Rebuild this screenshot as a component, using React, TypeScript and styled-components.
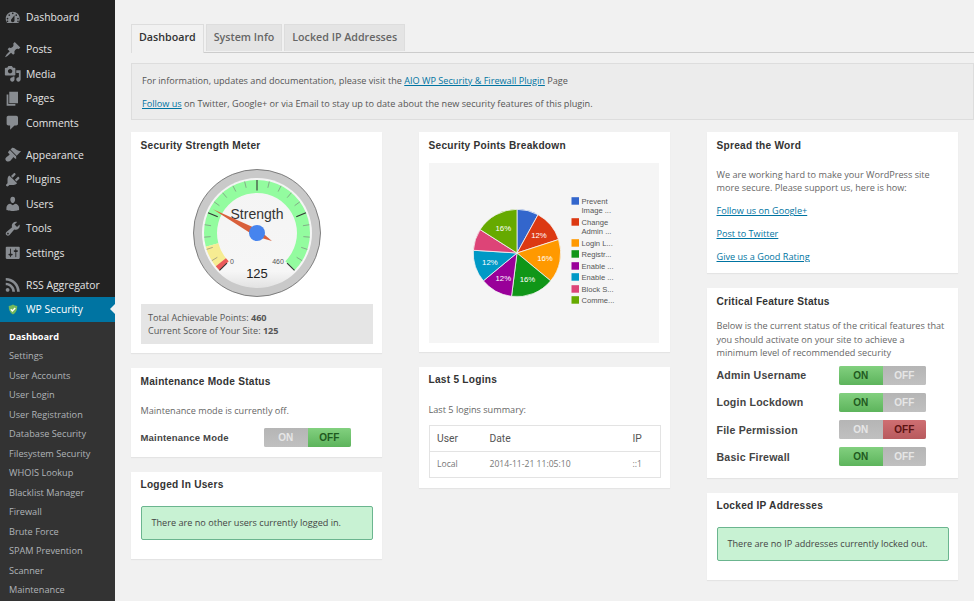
import React from "react"
import styled, { createGlobalStyle } from "styled-components"

const GlobalStyle = createGlobalStyle`
    html, body {
        margin: 0;
        padding: 0;
        height: 100%;
        overflow: hidden;
        background: #f1f1f1;
    }
    body {
        font-family: "Open Sans", sans-serif;
        font-size: 9.15px;
        color: #555;
    }
`

const icons: Record<string, string> = {
    dashboard:
        "M3.76 16h12.48c1.1-1.37 1.76-3.11 1.76-5 0-4.42-3.58-8-8-8s-8 3.58-8 8c0 1.89.66 3.63 1.76 5zM10 4c.55 0 1 .45 1 1s-.45 1-1 1-1-.45-1-1 .45-1 1-1zM6 6c.55 0 1 .45 1 1s-.45 1-1 1-1-.45-1-1 .45-1 1-1zm8 0c.55 0 1 .45 1 1s-.45 1-1 1-1-.45-1-1 .45-1 1-1zm-5.37 5.55L12 7v6c0 1.1-.9 2-2 2s-2-.9-2-2c0-.57.24-1.08.63-1.45zM4 10c.55 0 1 .45 1 1s-.45 1-1 1-1-.45-1-1 .45-1 1-1zm12 0c.55 0 1 .45 1 1s-.45 1-1 1-1-.45-1-1 .45-1 1-1zm-12 3c.55 0 1 .45 1 1s-.45 1-1 1-1-.45-1-1 .45-1 1-1zm12 0c.55 0 1 .45 1 1s-.45 1-1 1-1-.45-1-1 .45-1 1-1z",
    posts:
        "M10.44 3.02l1.82-1.82 6.36 6.35-1.83 1.82c-1.05-.68-2.48-.57-3.41.36l-.75.75c-.92.93-1.04 2.35-.35 3.41l-1.83 1.82-2.41-2.41-2.8 2.79c-.42.42-3.38 2.71-3.8 2.29s1.86-3.39 2.28-3.81l2.79-2.79L4.1 9.36l1.83-1.82c1.05.69 2.48.57 3.4-.36l.75-.75c.93-.92 1.05-2.35.36-3.41z",
    media:
        "M13 11V4c0-.55-.45-1-1-1h-1.67L9 1H5L3.67 3H2c-.55 0-1 .45-1 1v7c0 .55.45 1 1 1h10c.55 0 1-.45 1-1zM7 4.5c1.38 0 2.5 1.12 2.5 2.5S8.38 9.5 7 9.5 4.5 8.38 4.5 7 5.62 4.5 7 4.5zM14 6h5v10.5c0 1.38-1.12 2.5-2.5 2.5S14 17.88 14 16.5s1.12-2.5 2.5-2.5c.17 0 .34.02.5.05V9h-3V6zm-4 8.05V13h2v3.5c0 1.38-1.12 2.5-2.5 2.5S7 17.88 7 16.5 8.12 14 9.5 14c.17 0 .34.02.5.05z",
    pages: "M6 15V2h10v13H6zm-1 1h8v2H3V5h2v11z",
    comments:
        "M5 2h9c1.1 0 2 .9 2 2v7c0 1.1-.9 2-2 2h-2l-5 5v-5H5c-1.1 0-2-.9-2-2V4c0-1.1.9-2 2-2z",
    appearance:
        "M14.48 11.06L7.41 3.99l1.5-1.5c.5-.56 2.3-.47 3.51.32 1.21.8 1.43 1.28 2.91 2.1 1.18.64 2.45 1.26 4.45.85zm-.71.71L6.7 4.7 4.93 6.47c-.39.39-.39 1.02 0 1.41l1.06 1.06c.39.39.39 1.03 0 1.42-.6.6-1.43 1.11-2.21 1.69-.35.26-.7.53-1.01.84C1.43 13.71.96 15.65 2.65 17s3.64.89 4.99-.5c.3-.3.57-.65.83-1 .58-.78 1.09-1.6 1.69-2.21.39-.39 1.03-.39 1.42 0l1.06 1.06c.39.39 1.02.39 1.41 0z",
    plugins:
        "M13.11 4.36L9.87 7.6 8 5.73l3.24-3.24c.35-.34 1.05-.2 1.56.32.52.51.66 1.21.31 1.55zm-8 1.77l.91-1.12 9.01 9.01-1.19.84c-.71.71-2.63 1.16-3.82 1.16H6.14L4.9 17.26c-.59.59-1.54.59-2.12 0-.59-.58-.59-1.53 0-2.12l1.24-1.24v-3.88c0-1.13.4-3.19 1.09-3.89zm7.26 3.97l3.24-3.24c.34-.35 1.04-.21 1.55.31.52.51.66 1.21.31 1.55l-3.24 3.25z",
    users:
        "M10 9.25c-2.27 0-2.73-3.44-2.73-3.44C7 4.02 7.82 2 9.97 2c2.16 0 2.98 2.02 2.71 3.81 0 0-.41 3.44-2.68 3.44zm0 2.57L12.72 10c2.39 0 4.52 2.33 4.52 4.53v2.49s-3.65 1.13-7.24 1.13c-3.65 0-7.24-1.13-7.24-1.13v-2.49c0-2.25 1.94-4.48 4.47-4.48z",
    tools:
        "M16.68 9.77c-1.34 1.34-3.3 1.67-4.95.99l-5.41 6.52c-.99.99-2.59.99-3.58 0s-.99-2.59 0-3.57l6.52-5.42c-.68-1.65-.35-3.61.99-4.95 1.28-1.28 3.12-1.62 4.72-1.06l-2.89 2.89 2.82 2.82 2.86-2.87c.53 1.58.18 3.39-1.08 4.65zM3.81 16.21c.4.39 1.04.39 1.43 0 .4-.4.4-1.04 0-1.43-.39-.4-1.03-.4-1.43 0-.39.39-.39 1.03 0 1.43z",
    settings:
        "M18 16V4c0-.55-.45-1-1-1H3c-.55 0-1 .45-1 1v12c0 .55.45 1 1 1h14c.55 0 1-.45 1-1zM8 11h1c.55 0 1 .45 1 1s-.45 1-1 1H8v1.5c0 .28-.22.5-.5.5s-.5-.22-.5-.5V13H6c-.55 0-1-.45-1-1s.45-1 1-1h1V5.5c0-.28.22-.5.5-.5s.5.22.5.5V11zm5-2h-1c-.55 0-1-.45-1-1s.45-1 1-1h1V5.5c0-.28.22-.5.5-.5s.5.22.5.5V7h1c.55 0 1 .45 1 1s-.45 1-1 1h-1v5.5c0 .28-.22.5-.5.5s-.5-.22-.5-.5V9z",
    rss: "M14.92 18H18C18 9.32 10.82 2.25 2 2.25v3.02c7.12 0 12.92 5.71 12.92 12.73zm-5.44 0h3.08C12.56 12.27 7.82 7.6 2 7.6v3.02c2 0 3.87.77 5.29 2.16C8.7 14.17 9.48 16.03 9.48 18zm-5.35-.02c1.17 0 2.13-.93 2.13-2.09 0-1.15-.96-2.09-2.13-2.09-1.18 0-2.13.94-2.13 2.09 0 1.16.95 2.09 2.13 2.09z",
}

const menuGroups = [
    [["dashboard", "Dashboard"]],
    [
        ["posts", "Posts"],
        ["media", "Media"],
        ["pages", "Pages"],
        ["comments", "Comments"],
    ],
    [
        ["appearance", "Appearance"],
        ["plugins", "Plugins"],
        ["users", "Users"],
        ["tools", "Tools"],
        ["settings", "Settings"],
    ],
    [["rss", "RSS Aggregator"]],
]

const subItems = [
    "Dashboard",
    "Settings",
    "User Accounts",
    "User Login",
    "User Registration",
    "Database Security",
    "Filesystem Security",
    "WHOIS Lookup",
    "Blacklist Manager",
    "Firewall",
    "Brute Force",
    "SPAM Prevention",
    "Scanner",
    "Maintenance",
]

// polar helper, 0 deg points up and angles go clockwise
const polar = (cx: number, cy: number, r: number, deg: number) => {
    const a = (deg * Math.PI) / 180
    return [cx + r * Math.sin(a), cy - r * Math.cos(a)]
}

const bandPath = (cx: number, cy: number, r1: number, r2: number, from: number, to: number) => {
    const [ax, ay] = polar(cx, cy, r2, from)
    const [bx, by] = polar(cx, cy, r2, to)
    const [ix, iy] = polar(cx, cy, r1, to)
    const [jx, jy] = polar(cx, cy, r1, from)
    const large = to - from > 180 ? 1 : 0
    return `M${ax} ${ay}A${r2} ${r2} 0 ${large} 1 ${bx} ${by}L${ix} ${iy}A${r1} ${r1} 0 ${large} 0 ${jx} ${jy}Z`
}

const Gauge = () => {
    const cx = 71
    const cy = 71
    const ticks = []
    for (let i = 0; i <= 20; i++) {
        const deg = -135 + i * 13.5
        const major = i % 5 === 0
        const [x1, y1] = polar(cx, cy, major ? 42.5 : 46.5, deg)
        const [x2, y2] = polar(cx, cy, 53, deg)
        ticks.push(
            <line
                key={i}
                x1={x1}
                y1={y1}
                x2={x2}
                y2={y2}
                stroke={major ? "#333" : "#777"}
                strokeWidth={major ? 1.1 : 0.6}
            />
        )
    }
    const needle = -61.6
    const [tipX, tipY] = polar(cx, cy, 50, needle)
    const [tailX, tailY] = polar(cx, cy, 17, needle + 180)
    const [l1, l2] = polar(cx, cy, 3.6, needle - 90)
    const [r1, r2] = polar(cx, cy, 3.6, needle + 90)
    return (
        <svg width="142" height="142" viewBox="0 0 142 142">
            <defs>
                <linearGradient id="face" x1="0" y1="0" x2="0" y2="1">
                    <stop offset="0" stopColor="#f4f4f4" />
                    <stop offset="0.85" stopColor="#f6f6f6" />
                    <stop offset="1" stopColor="#e2e2e2" />
                </linearGradient>
            </defs>
            <circle cx={cx} cy={cy} r="63.5" fill="#c9c9c9" stroke="#666" strokeWidth="0.8" />
            <circle cx={cx} cy={cy} r="55" fill="url(#face)" />
            <path d={bandPath(cx, cy, 40, 53, -105, 135)} fill="#93fc9f" />
            <path d={bandPath(cx, cy, 40, 53, -135, -105)} fill="#f6ec92" />
            <path d={bandPath(cx, cy, 40, 53, -135, -129)} fill="#ea5a5a" />
            {ticks}
            <text x={cx} y="57" textAnchor="middle" fontFamily="Liberation Sans" fontSize="14" fill="#333">
                Strength
            </text>
            <text x="46" y="102" textAnchor="middle" fontFamily="Liberation Sans" fontSize="7" fill="#555">
                0
            </text>
            <text x="92" y="102" textAnchor="middle" fontFamily="Liberation Sans" fontSize="7" fill="#555">
                460
            </text>
            <text x={cx} y="116" textAnchor="middle" fontFamily="Liberation Sans" fontSize="13" fill="#222">
                125
            </text>
            <polygon
                points={`${tipX},${tipY} ${l1},${l2} ${tailX},${tailY} ${r1},${r2}`}
                fill="#d9603b"
            />
            <circle cx={cx} cy={cy} r="8" fill="#4684ee" />
        </svg>
    )
}

const slices = [
    { pct: 8, color: "#3366cc" },
    { pct: 12, color: "#dc3912", label: "12%" },
    { pct: 16, color: "#ff9900", label: "16%" },
    { pct: 16, color: "#109618", label: "16%" },
    { pct: 12, color: "#990099", label: "12%" },
    { pct: 12, color: "#0099c6", label: "12%" },
    { pct: 8, color: "#dd4477" },
    { pct: 16, color: "#66aa00", label: "16%" },
]

const legend = [
    { color: "#3366cc", lines: ["Prevent", "Image ..."], y: 38 },
    { color: "#dc3912", lines: ["Change", "Admin ..."], y: 59 },
    { color: "#ff9900", lines: ["Login L..."], y: 80 },
    { color: "#109618", lines: ["Registr..."], y: 91 },
    { color: "#990099", lines: ["Enable ..."], y: 103 },
    { color: "#0099c6", lines: ["Enable ..."], y: 114 },
    { color: "#dd4477", lines: ["Block S..."], y: 126 },
    { color: "#66aa00", lines: ["Comme..."], y: 137 },
]

const PieChart = () => {
    const cx = 88
    const cy = 90
    const r = 43.7
    let acc = 0
    const parts = slices.map((s, i) => {
        const from = (acc / 100) * 360
        acc += s.pct
        const to = (acc / 100) * 360
        const [ax, ay] = polar(cx, cy, r, from)
        const [bx, by] = polar(cx, cy, r, to)
        const [lx, ly] = polar(cx, cy, 28.5, (from + to) / 2)
        return (
            <g key={i}>
                <path
                    d={`M${cx} ${cy}L${ax} ${ay}A${r} ${r} 0 0 1 ${bx} ${by}Z`}
                    fill={s.color}
                    stroke="#f5f5f5"
                    strokeWidth="0.8"
                />
                {s.label && (
                    <text
                        x={lx}
                        y={ly + 2.8}
                        textAnchor="middle"
                        fontFamily="Liberation Sans"
                        fontSize="7.8"
                        fill="#fff"
                    >
                        {s.label}
                    </text>
                )}
            </g>
        )
    })
    return (
        <svg width="230" height="180" viewBox="0 0 230 180">
            {parts}
            {legend.map((item) => (
                <g key={item.y}>
                    <rect x="142.5" y={item.y - 3.8} width="7.5" height="7.5" fill={item.color} />
                    {item.lines.map((line, i) => (
                        <text
                            key={line}
                            x="152.5"
                            y={item.y + 2.7 + i * 9.6}
                            fontFamily="Liberation Sans"
                            fontSize="7.6"
                            fill="#555"
                        >
                            {line}
                        </text>
                    ))}
                </g>
            ))}
        </svg>
    )
}

const Switch = ({ on, danger }: { on: boolean; danger?: boolean }) => (
    <SwitchWrap>
        <SwitchPart $active={on}>ON</SwitchPart>
        <SwitchPart $active={!on} $danger={danger}>
            OFF
        </SwitchPart>
    </SwitchWrap>
)

const App = () => {
    return (
        <Page>
            <GlobalStyle />
            <Sidebar>
                {menuGroups.map((group, g) => (
                    <MenuGroup key={g}>
                        {group.map(([icon, label]) => (
                            <MenuItem key={label}>
                                <MenuIcon viewBox="0 0 20 20">
                                    <path d={icons[icon]} />
                                </MenuIcon>
                                {label}
                            </MenuItem>
                        ))}
                    </MenuGroup>
                ))}
                <ActiveItem>
                    <svg width="10" height="11" viewBox="0 0 14 15">
                        <path d="M7 0.5c1.8 1.3 3.7 1.9 6 2 0 5.5-1.6 9.6-6 12-4.4-2.4-6-6.5-6-12 2.3-.1 4.2-.7 6-2z" fill="#74b85c" />
                        <path d="M3.9 7.3l2.2 2.3 4-4.3" fill="none" stroke="#fff" strokeWidth="2" />
                    </svg>
                    WP Security
                </ActiveItem>
                <SubMenu>
                    {subItems.map((item, i) => (
                        <SubItem key={item} $current={i === 0}>
                            {item}
                        </SubItem>
                    ))}
                </SubMenu>
            </Sidebar>
            <Main>
                <Tabs>
                    <Tab $active>Dashboard</Tab>
                    <Tab>System Info</Tab>
                    <Tab>Locked IP Addresses</Tab>
                </Tabs>
                <Notice>
                    <NoticeLine>
                        For information, updates and documentation, please visit the{" "}
                        <Link href="#">AIO WP Security &amp; Firewall Plugin</Link> Page
                    </NoticeLine>
                    <NoticeLine>
                        <Link href="#">Follow us</Link> on Twitter, Google+ or via Email to stay up to date
                        about the new security features of this plugin.
                    </NoticeLine>
                </Notice>
                <Columns>
                    <Column>
                        <Card>
                            <CardTitle>Security Strength Meter</CardTitle>
                            <GaugeWrap>
                                <Gauge />
                            </GaugeWrap>
                            <ScoreBox>
                                <div>
                                    Total Achievable Points: <b>460</b>
                                </div>
                                <div>
                                    Current Score of Your Site: <b>125</b>
                                </div>
                            </ScoreBox>
                        </Card>
                        <Card>
                            <CardTitle>Maintenance Mode Status</CardTitle>
                            <Para>Maintenance mode is currently off.</Para>
                            <StatusRow>
                                <StatusLabel $small>Maintenance Mode</StatusLabel>
                                <Switch on={false} />
                            </StatusRow>
                        </Card>
                        <Card>
                            <CardTitle>Logged In Users</CardTitle>
                            <Alert>There are no other users currently logged in.</Alert>
                        </Card>
                    </Column>
                    <Column>
                        <Card>
                            <CardTitle>Security Points Breakdown</CardTitle>
                            <ChartBox>
                                <PieChart />
                            </ChartBox>
                        </Card>
                        <Card>
                            <CardTitle>Last 5 Logins</CardTitle>
                            <Para>Last 5 logins summary:</Para>
                            <LoginTable>
                                <thead>
                                    <tr>
                                        <th>User</th>
                                        <th>Date</th>
                                        <th>IP</th>
                                    </tr>
                                </thead>
                                <tbody>
                                    <tr>
                                        <td>Local</td>
                                        <td>2014-11-21 11:05:10</td>
                                        <td>::1</td>
                                    </tr>
                                </tbody>
                            </LoginTable>
                        </Card>
                    </Column>
                    <Column>
                        <Card>
                            <CardTitle>Spread the Word</CardTitle>
                            <Para>
                                We are working hard to make your WordPress site
                                <br />
                                more secure. Please support us, here is how:
                            </Para>
                            <LinkLine>
                                <Link href="#">Follow us on Google+</Link>
                            </LinkLine>
                            <LinkLine>
                                <Link href="#">Post to Twitter</Link>
                            </LinkLine>
                            <LinkLine>
                                <Link href="#">Give us a Good Rating</Link>
                            </LinkLine>
                        </Card>
                        <Card>
                            <CardTitle>Critical Feature Status</CardTitle>
                            <Para $tight>
                                Below is the current status of the critical features that
                                <br />
                                you should activate on your site to achieve a
                                <br />
                                minimum level of recommended security
                            </Para>
                            <StatusList>
                                <StatusRow>
                                    <StatusLabel>Admin Username</StatusLabel>
                                    <Switch on />
                                </StatusRow>
                                <StatusRow>
                                    <StatusLabel>Login Lockdown</StatusLabel>
                                    <Switch on />
                                </StatusRow>
                                <StatusRow>
                                    <StatusLabel>File Permission</StatusLabel>
                                    <Switch on={false} danger />
                                </StatusRow>
                                <StatusRow>
                                    <StatusLabel>Basic Firewall</StatusLabel>
                                    <Switch on />
                                </StatusRow>
                            </StatusList>
                        </Card>
                        <Card>
                            <CardTitle>Locked IP Addresses</CardTitle>
                            <Alert>There are no IP addresses currently locked out.</Alert>
                        </Card>
                    </Column>
                </Columns>
            </Main>
        </Page>
    )
}

export default App

const Page = styled.div`
    display: flex;
    width: 974px;
    height: 601px;
    overflow: hidden;
`
const Sidebar = styled.nav`
    flex: 0 0 115px;
    background-color: #222;
    padding-top: 5px;
    box-sizing: border-box;
`
const MenuGroup = styled.div`
    margin-bottom: 7.5px;

    &:nth-child(4) {
        margin-bottom: 0;
    }
`
const MenuItem = styled.div`
    display: flex;
    align-items: center;
    height: 24.5px;
    padding-left: 3.5px;
    color: #e4e4e4;
    font-size: 10.35px;
`
const MenuIcon = styled.svg`
    width: 17.5px;
    height: 17.5px;
    margin-right: 5px;
    fill: #888c91;
`
const ActiveItem = styled.div`
    position: relative;
    display: flex;
    align-items: center;
    gap: 8px;
    height: 24.5px;
    padding-left: 8px;
    background-color: #0074a2;
    color: #fff;
    font-size: 10.35px;

    &::after {
        content: "";
        position: absolute;
        right: 0;
        top: 7px;
        border: 5.5px solid transparent;
        border-left: 0;
        border-right-color: #f1f1f1;
    }
`
const SubMenu = styled.div`
    background-color: #333;
    padding: 5px 0 8px 9px;
`
const SubItem = styled.div<{ $current?: boolean }>`
    display: flex;
    align-items: center;
    height: 19.5px;
    font-size: 9.2px;
    color: ${(p) => (p.$current ? "#fff" : "#b0b4b8")};
    font-weight: ${(p) => (p.$current ? 700 : 400)};
`
const Main = styled.main`
    flex: 1;
    min-width: 0;
    padding: 24px 0 0 16px;
`
const Tabs = styled.div`
    display: flex;
    gap: 2px;
    height: 29px;
    box-sizing: border-box;
    border-bottom: 1px solid #ccc;
`
const Tab = styled.div<{ $active?: boolean }>`
    display: flex;
    align-items: center;
    height: ${(p) => (p.$active ? "29px" : "27px")};
    padding: 0 7px ${(p) => (p.$active ? "4px" : "2px")};
    box-sizing: border-box;
    border: 1px solid #ddd;
    border-bottom: 0;
    background-color: ${(p) => (p.$active ? "#f1f1f1" : "#e4e4e4")};
    color: ${(p) => (p.$active ? "#333" : "#666")};
    font-size: 10.7px;
    font-weight: 600;
`
const Notice = styled.div`
    margin-top: 10px;
    height: 57px;
    box-sizing: border-box;
    padding: 9.5px 10px;
    background-color: #ececec;
    border: 1px solid #ddd;
`
const NoticeLine = styled.div`
    line-height: 13px;
    color: #555;

    & + & {
        margin-top: 10px;
    }
`
const Link = styled.a`
    color: #0074a2;
    text-decoration: underline;
`
const Columns = styled.div`
    display: flex;
    gap: 37px;
    margin-top: 12px;
`
const Column = styled.div`
    flex: 0 0 251px;
    min-width: 0;
    display: flex;
    flex-direction: column;
    gap: 15px;
`
const Card = styled.section`
    background-color: #fff;
    padding: 0 9.5px 10px;
    box-shadow: 0 1px 1px rgba(0, 0, 0, 0.05);
`
const CardTitle = styled.h3`
    margin: 0;
    height: 26px;
    display: flex;
    align-items: center;
    font-family: "Liberation Sans", sans-serif;
    font-size: 10.15px;
    letter-spacing: 0.25px;
    font-weight: 700;
    color: #333;
`
const GaugeWrap = styled.div`
    display: flex;
    justify-content: center;
    margin: 4px 0 0;
    height: 142px;
`
const ScoreBox = styled.div`
    height: 40px;
    margin-bottom: -1px;
    box-sizing: border-box;
    padding: 7px 7.5px;
    background-color: #e5e5e5;
    line-height: 13px;
    color: #555;
`
const Para = styled.p<{ $tight?: boolean }>`
    margin: ${(p) => (p.$tight ? "5px" : "10px")} 0 0;
    line-height: 13.2px;
    color: #666;
`
const StatusList = styled.div`
    margin-top: 6.5px;
    padding-bottom: 1.5px;
    display: flex;
    flex-direction: column;
    gap: 8.3px;
`
const StatusRow = styled.div`
    display: flex;
    align-items: center;

    ${Para} + & {
        margin-top: 10.5px;
    }
`
const StatusLabel = styled.div<{ $small?: boolean }>`
    flex: 0 0 ${(p) => (p.$small ? "123.5px" : "122.5px")};
    font-family: "Liberation Sans", sans-serif;
    font-size: ${(p) => (p.$small ? "9.5px" : "10.6px")};
    font-weight: 700;
    letter-spacing: 0.2px;
    color: #444;
`
const SwitchWrap = styled.div`
    display: flex;
    width: 87px;
    height: 19px;
    border-radius: 2px;
    overflow: hidden;
    background-color: #bbb;
`
const SwitchPart = styled.div<{ $active?: boolean; $danger?: boolean }>`
    flex: 1;
    display: flex;
    align-items: center;
    justify-content: center;
    font-family: "Liberation Sans", sans-serif;
    font-size: 10px;
    font-weight: 700;
    color: ${(p) => (p.$active ? (p.$danger ? "#5c1212" : "#1f5a1f") : "#e6e6e6")};
    background: ${(p) =>
        p.$active
            ? p.$danger
                ? "linear-gradient(#cf6f72, #b85a5e)"
                : "linear-gradient(#82d07f, #5db45c)"
            : "linear-gradient(#b5b5b5, #c0c0c0)"};
`
const Alert = styled.div`
    margin: 8px 0 9px;
    height: 34px;
    box-sizing: border-box;
    display: flex;
    align-items: center;
    padding: 0 10px;
    background-color: #c8f2d3;
    border: 1px solid #6bb58f;
    border-radius: 2px;
    color: #444;
`
const ChartBox = styled.div`
    margin-top: 5px;
    margin-bottom: -1.5px;
    width: 230px;
    height: 180px;
    background-color: #f5f5f5;

    svg {
        display: block;
    }
`
const LoginTable = styled.table`
    width: 232px;
    margin-top: 9px;
    border-collapse: collapse;
    table-layout: fixed;
    border: 1px solid #e3e3e3;
    color: #777;

    th,
    td {
        height: 25px;
        padding: 0 0 0 7.5px;
        text-align: left;
        font-weight: 400;
    }

    th {
        font-family: "Roboto", sans-serif;
        font-size: 10.3px;
        color: #555;
        border-bottom: 1px solid #e3e3e3;
    }

    th:nth-child(1) {
        width: 45px;
    }

    th:nth-child(3) {
        width: 27px;
    }

    td {
        font-size: 8.6px;
    }
`
const LinkLine = styled.div`
    margin-top: 10px;
    line-height: 13px;
`
